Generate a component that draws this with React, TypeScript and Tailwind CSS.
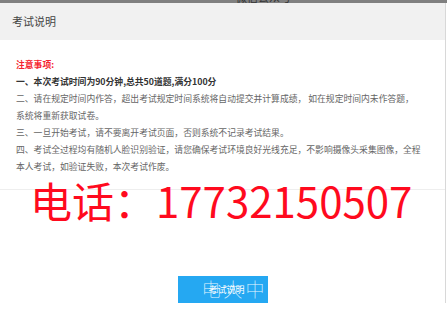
const notes = [
    { text: '一、本次考试时间为90分钟,总共50道题,满分100分', bold: true },
    { text: '二、请在规定时间内作答，超出考试规定时间系统将自动提交并计算成绩， 如在规定时间内未作答题，系统将重新获取试卷。' },
    { text: '三、一旦开始考试，请不要离开考试页面，否则系统不记录考试结果。' },
    { text: '四、考试全过程均有随机人脸识别验证，请您确保考试环境良好光线充足，不影响摄像头采集图像，全程本人考试，如验证失败，本次考试作废。' },
];

export default function App() {
    return (
        <div
            className="relative h-[315px] w-[447px] overflow-hidden bg-white"
            style={{ fontFamily: '"Microsoft YaHei", "Noto Sans CJK SC", sans-serif' }}
        >
            <div className="flex h-[3px] justify-center overflow-hidden bg-[#808080]">
                <span className="-mt-[8px] ml-[80px] text-[11px] leading-[11px] text-[#333]">
                    微信公众号
                </span>
            </div>

            <div className="w-[446px] border-r border-[#d8d8d8]">
                <div className="flex h-[37px] items-center bg-[#f1f1f1] px-[12px] text-[11px] text-[#444]">
                    考试说明
                </div>

                <div className="h-[150px] border-b border-[#eeeeee] pl-[16px] pr-[24px] pt-[16px] text-[8.8px] leading-[17px] text-[#666]">
                    <div className="font-bold text-[#f5222d]">注意事项:</div>
                    {notes.map((n) => (
                        <div key={n.text} className={n.bold ? 'font-bold text-[#333]' : ''}>
                            {n.text}
                        </div>
                    ))}
                </div>

                <div className="flex justify-center pt-[86px]">
                    <button
                        type="button"
                        className="relative flex h-[27px] w-[90px] items-center justify-center bg-[#25a8f2] text-[9px] text-white"
                    >
                        <span className="ml-[8px]">考试说明</span>
                        <span className="absolute left-[24px] top-[-2px] whitespace-nowrap text-[19px] font-thin leading-[30px] tracking-[3px] text-white/90">
                            电大中·
                        </span>
                    </button>
                </div>
            </div>

            <div className="absolute left-[30px] top-[175px] text-[42px] leading-[50px] text-[#ff0a1e]">
                电话：17732150507
            </div>
        </div>
    );
}
